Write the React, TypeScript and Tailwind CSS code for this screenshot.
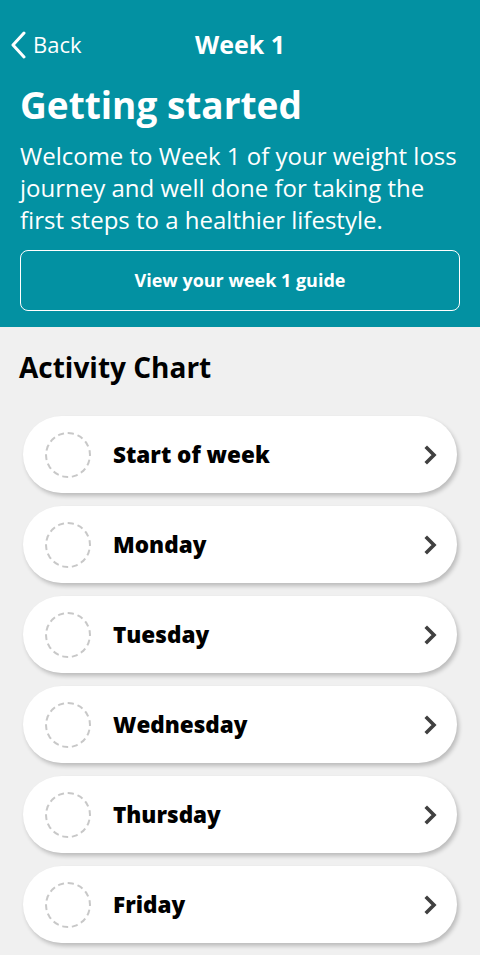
import React from "react";

const days = [
  "Start of week",
  "Monday",
  "Tuesday",
  "Wednesday",
  "Thursday",
  "Friday",
];

const DayRow: React.FC<{ label: string }> = ({ label }) => (
  <button className="flex h-[77px] w-full items-center rounded-full bg-white pl-[22px] pr-[18px] text-left shadow-[2px_3px_4px_rgba(0,0,0,0.22)]">
    <span className="h-[46px] w-[46px] shrink-0 rounded-full border-2 border-dashed border-[#c8c8c8]" />
    <span className="ml-[22px] flex-1 text-[22.5px] font-extrabold text-black">
      {label}
    </span>
    <svg
      className="h-[22px] w-[16px] text-[#404040]"
      viewBox="0 0 16 22"
      fill="none"
      stroke="currentColor"
      strokeWidth={3.6}
      strokeLinecap="square"
    >
      <path d="M4 4l7 7-7 7" />
    </svg>
  </button>
);

export default function App() {
  return (
    <div
      className="min-h-screen bg-[#f0f0f0]"
      style={{ fontFamily: '"Open Sans", "DejaVu Sans", sans-serif' }}
    >
      <div className="bg-[#0391a2] px-5 pb-4 text-white">
        <div className="relative flex h-[89px] items-center">
          <button className="absolute left-[-10px] flex items-center gap-[5px] text-[22px]">
            <svg
              className="h-[28px] w-[18px]"
              viewBox="0 0 18 28"
              fill="none"
              stroke="currentColor"
              strokeWidth={3}
              strokeLinecap="round"
              strokeLinejoin="round"
            >
              <path d="M14 2L3 14l11 12" />
            </svg>
            Back
          </button>
          <h1 className="w-full text-center text-[25px] font-bold">Week 1</h1>
        </div>
        <h2 className="-mt-[4px] text-[37px] font-bold leading-[40px]">
          Getting started
        </h2>
        <p className="mt-[15px] text-[24px] leading-[32px]">
          Welcome to Week 1 of your weight loss journey and well done for
          taking the first steps to a healthier lifestyle.
        </p>
        <button className="mt-[14px] flex h-[61px] w-full items-center justify-center rounded-lg border border-white text-[18px] font-bold">
          View your week 1 guide
        </button>
      </div>
      <div className="px-[23px] pb-6">
        <h3 className="-ml-[4px] pt-[22px] text-[28px] font-bold leading-[36px] text-black">
          Activity Chart
        </h3>
        <div className="mt-[31px] flex flex-col gap-[13px]">
          {days.map((d) => (
            <DayRow key={d} label={d} />
          ))}
        </div>
      </div>
    </div>
  );
}
